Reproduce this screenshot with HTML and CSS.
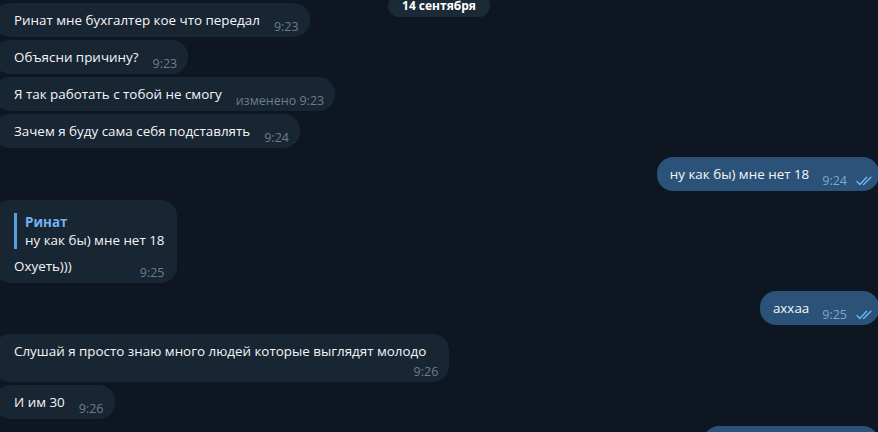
FILE: index.html
```html
<!DOCTYPE html>
<html lang="ru">
<head>
<meta charset="utf-8">
<title>Chat</title>
<link rel="stylesheet" href="styles.css">
</head>
<body>
<div class="chat">
  <div class="date-pill">14 сентября</div>

  <div class="row in first">
    <div class="bubble"><span class="text">Ринат мне бухгалтер кое что передал</span><span class="meta">9:23</span></div>
  </div>
  <div class="row in same">
    <div class="bubble"><span class="text">Объясни причину?</span><span class="meta">9:23</span></div>
  </div>
  <div class="row in same">
    <div class="bubble"><span class="text">Я так работать с тобой не смогу</span><span class="meta">изменено 9:23</span></div>
  </div>
  <div class="row in same">
    <div class="bubble"><span class="text">Зачем я буду сама себя подставлять</span><span class="meta">9:24</span></div>
  </div>

  <div class="row out">
    <div class="bubble"><span class="text">ну как бы) мне нет 18</span><span class="meta">9:24<svg class="checks" width="17" height="10" viewBox="0 0 17 10"><path d="M1 5.6l2.9 2.9L10.6 1.2M7.6 8.5L14.9 1.2" fill="none" stroke="currentColor" stroke-width="1.4" stroke-linecap="round" stroke-linejoin="round"/></svg></span></div>
  </div>

  <div class="row in">
    <div class="bubble reply">
      <div class="quote">
        <div class="quote-name">Ринат</div>
        <div class="quote-text">ну как бы) мне нет 18</div>
      </div>
      <div class="line"><span class="text">Охуеть)))</span><span class="meta">9:25</span></div>
    </div>
  </div>

  <div class="row out near">
    <div class="bubble"><span class="text">аххаа</span><span class="meta">9:25<svg class="checks" width="17" height="10" viewBox="0 0 17 10"><path d="M1 5.6l2.9 2.9L10.6 1.2M7.6 8.5L14.9 1.2" fill="none" stroke="currentColor" stroke-width="1.4" stroke-linecap="round" stroke-linejoin="round"/></svg></span></div>
  </div>

  <div class="row in">
    <div class="bubble wrap"><span class="text">Слушай я просто знаю много людей которые выглядят молодо</span><span class="meta">9:26</span></div>
  </div>
  <div class="row in same">
    <div class="bubble"><span class="text">И им 30</span><span class="meta">9:26</span></div>
  </div>

  <div class="row out last">
    <div class="bubble stub"></div>
  </div>
</div>
</body>
</html>
```

FILE: styles.css
```css
* { box-sizing: border-box; }

html, body {
  margin: 0;
  padding: 0;
}

body {
  width: 878px;
  height: 432px;
  overflow: hidden;
  background: #0e1621;
  font-family: "Open Sans", "Noto Sans", sans-serif;
  color: #f5f6f8;
}

.chat {
  position: relative;
  height: 432px;
  overflow: hidden;
  display: flex;
  flex-direction: column;
  padding-top: 3px;
}

.date-pill {
  position: absolute;
  top: -6px;
  left: 50%;
  transform: translateX(-50%);
  height: 23px;
  line-height: 23px;
  padding: 0 14px;
  border-radius: 12px;
  background: #1c2a38;
  color: #ffffff;
  font-size: 12px;
  font-weight: 700;
  white-space: nowrap;
  z-index: 2;
}

.row {
  display: flex;
  margin-top: 9px;
}

.row.first { margin-top: 0; }
.row.same { margin-top: 3px; }
.row.near { margin-top: 8px; }
.row.last { margin-top: 7px; }

.row.in { justify-content: flex-start; }
.row.out { justify-content: flex-end; }

.bubble {
  display: flex;
  align-items: flex-end;
  background: #182533;
  border-radius: 16px;
  padding: 8px 11px 3px 20px;
  font-size: 13.4px;
}

.in .bubble { margin-left: -6px; }

.out .bubble {
  background: #2b5278;
  padding: 8px 6px 3px 13px;
  margin-right: -1px;
}

.text {
  line-height: 18px;
  margin-bottom: 5px;
  white-space: nowrap;
}

.meta {
  display: flex;
  align-items: center;
  gap: 9px;
  margin-left: 14px;
  font-size: 12.5px;
  line-height: 14px;
  color: #6b7d8e;
  white-space: nowrap;
}

.out .meta {
  color: #7fa8cf;
  margin-left: 13px;
}

.checks {
  color: #6fb5f0;
  display: block;
}

.bubble.wrap {
  flex-direction: column;
  align-items: flex-start;
}

.bubble.wrap .text { margin-right: 12px; }

.bubble.wrap .meta { align-self: flex-end; }

.bubble.reply {
  flex-direction: column;
  align-items: stretch;
  padding-right: 13px;
}

.quote {
  margin-top: 5px;
  border-left: 3px solid #5a9fdc;
  padding-left: 8px;
  line-height: 18px;
}

.quote-name {
  color: #6fb4f2;
  font-weight: 700;
}

.line {
  display: flex;
  align-items: flex-end;
  justify-content: space-between;
  margin-top: 8px;
}

.bubble.stub {
  width: 176px;
  height: 34px;
}
```
